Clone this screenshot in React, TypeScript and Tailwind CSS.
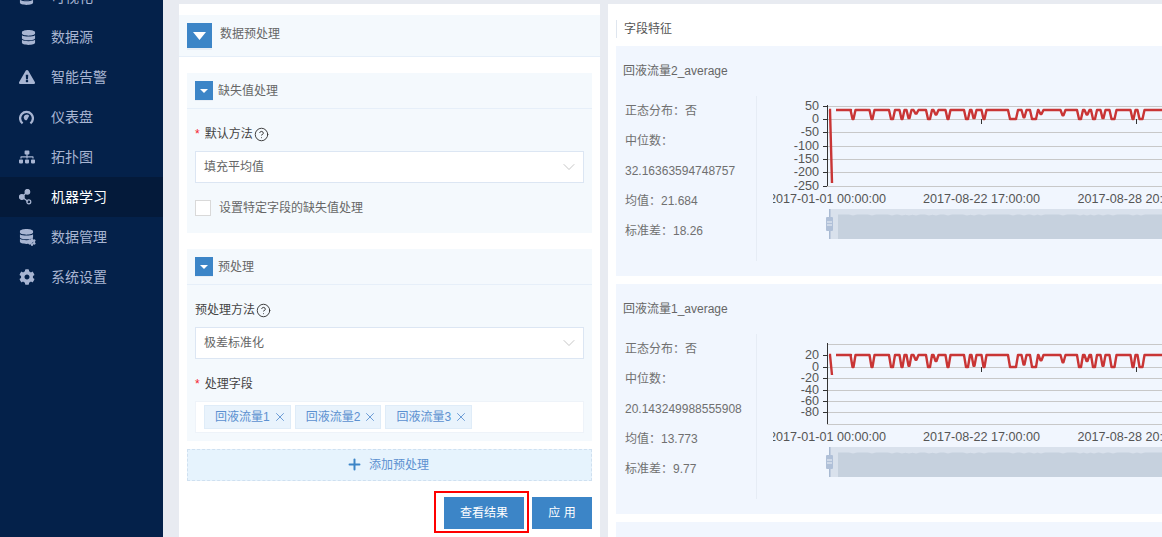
import { ChevronDown, CircleHelp, Plus, X } from "lucide-react";
import { FaCog, FaDatabase, FaExclamationTriangle, FaSitemap } from "react-icons/fa";

const FONT = "font-['Liberation_Sans','Noto_Sans_CJK_SC',sans-serif]";

function GaugeIcon() {
  return (
    <svg width="15" height="15" viewBox="0 0 15 15" fill="none">
      <path d="M3.6 13.4A6.4 6.4 0 1 1 11.4 13.4" stroke="currentColor" strokeWidth="2.3" />
      <path d="M5.4 9.2A2.8 2.8 0 0 1 10.2 5.8L8.2 9.4A1.5 1.5 0 0 1 5.4 9.2Z" fill="currentColor" />
    </svg>
  );
}

function MlIcon() {
  return (
    <svg width="15" height="16" viewBox="0 0 15 16" fill="none" stroke="currentColor" strokeWidth="1.2">
      <path d="M3 8L8 3M3 8L9 12.5" />
      <circle cx="2.8" cy="8" r="2.4" fill="currentColor" />
      <circle cx="8.4" cy="2.8" r="2.3" fill="currentColor" />
      <circle cx="9.8" cy="12.8" r="2" />
    </svg>
  );
}

function DataManageIcon() {
  return (
    <span className="relative block h-[16px] w-[16px]">
      <FaDatabase size={15} />
      <FaCog size={8} className="absolute -bottom-px -right-px" />
    </span>
  );
}

const NAV = [
  { label: "可视化", icon: <FaDatabase size={15} /> },
  { label: "数据源", icon: <FaDatabase size={15} className="ml-[2px]" /> },
  { label: "智能告警", icon: <FaExclamationTriangle size={16} /> },
  { label: "仪表盘", icon: <GaugeIcon /> },
  { label: "拓扑图", icon: <FaSitemap size={16} /> },
  { label: "机器学习", icon: <MlIcon />, active: true },
  { label: "数据管理", icon: <DataManageIcon /> },
  { label: "系统设置", icon: <FaCog size={16} /> },
];

// x = px from the chart's left edge, d = how deep the dip goes (0..1), w = half width of its floor
const DIPS: [number, number, number][] = [
  [80, 1, 0.5], [99, 1, 0.5], [119, 1, 1], [129, 1, 0.5], [136, 0.9, 0.5], [143, 0.4, 0.5], [156, 1, 1],
  [163, 0.5, 0.5], [175, 1, 0.5], [194, 1, 1], [201, 0.9, 0.5], [211, 1, 0.5], [240, 1, 3], [251, 0.8, 0.5],
  [261, 1, 2], [268, 0.45, 0.5], [290, 0.6, 0.5], [307, 1, 1], [314, 0.5, 0.5], [321, 1, 1], [330, 0.9, 0.5],
  [340, 1, 1.5], [360, 1, 0.5], [368, 1, 1.5],
];

function linePath(top: number, bottom: number) {
  let d = `M63 ${top}L78 ${top}`;
  for (const [x, depth, w] of DIPS) {
    const y = top + (bottom - top) * depth;
    d += `L${x - w - 2} ${top}L${x - w} ${y}L${x + w} ${y}L${x + w + 2} ${top}`;
  }
  return d + `L389 ${top}`;
}

function wave() {
  let d = "M65 5.5";
  for (const [x] of DIPS) d += `L${x - 4} 5.5L${x} 6.5L${x + 4} 5.5`;
  return d + "L389 5.5L389 30L65 30Z";
}

const XLABELS: [number, string][] = [
  [54.5, "2017-01-01 00:00:00"],
  [208.5, "2017-08-22 17:00:00"],
  [363, "2017-08-28 20:00:00"],
];

function Chart({ ticks, grid, zero, top, bottom, spike }: {
  ticks: [number, string][];
  grid: number[];
  zero: number;
  top: number;
  bottom: number;
  spike: number;
}) {
  return (
    <svg width="389" height="150" className="block shrink-0">
      {grid.map((y) => (
        <line key={y} x1="54" x2="389" y1={y + 0.5} y2={y + 0.5} stroke="#c8c8c8" />
      ))}
      <line x1="54.5" x2="54.5" y1={grid[0] - 1} y2="90" stroke="#333" />
      {ticks.map(([y, t]) => (
        <g key={t}>
          <line x1="50" x2="54" y1={y + 0.5} y2={y + 0.5} stroke="#333" />
          <text x="46" y={y + 4} textAnchor="end" fontSize="12.6" fill="#555">{t}</text>
        </g>
      ))}
      <line x1="208.5" x2="208.5" y1={zero} y2={zero + 5} stroke="#333" />
      <line x1="363.5" x2="363.5" y1={zero} y2={zero + 5} stroke="#333" />
      <path d={`M56 ${top}L57 ${top}L59 ${spike}`} stroke="#c93535" strokeWidth="2.4" fill="none" />
      <path d={linePath(top, bottom)} stroke="#c93535" strokeWidth="2.4" fill="none" strokeLinejoin="round" />
      {XLABELS.map(([x, t]) => (
        <text key={t} x={x} y="107" textAnchor="middle" fontSize="12.6" fill="#555">{t}</text>
      ))}
      <g transform="translate(0 113)">
        <rect x="56" width="333" height="30" fill="#d9e1ec" />
        <path d={wave()} fill="#c6d1de" />
        <rect x="56" width="1.5" height="30" fill="#a9bad2" />
        <rect x="53" y="8" width="7" height="14" rx="1" fill="#b0c0d8" />
        <rect x="54" y="12.5" width="5" height="1" fill="#eef2f8" />
        <rect x="54" y="15.5" width="5" height="1" fill="#eef2f8" />
      </g>
    </svg>
  );
}

function FieldCard({ title, stats, chart }: { title: string; stats: string[]; chart: React.ReactNode }) {
  return (
    <div className="mb-2 h-[230px] shrink-0 overflow-hidden bg-[#f1f6fe] pl-[7px] pt-[15px]">
      <p className="h-5 text-xs leading-5 text-[#666]">{title}</p>
      <div className="mt-[15px] flex items-start">
        <div className="h-[165px] w-[134px] shrink-0 border-r border-[#e6ecf5] pl-[2px] text-xs leading-[30px] text-[#707070]">
          {stats.map((s) => (
            <p key={s} className="whitespace-nowrap">{s}</p>
          ))}
        </div>
        <div className="ml-[16px]">{chart}</div>
      </div>
    </div>
  );
}

function Arrow({ big }: { big?: boolean }) {
  return big ? (
    <div className="flex h-[25px] w-[25px] shrink-0 items-center justify-center bg-[#3c85c7] shadow-[0_2px_0_#e8eef5]">
      <svg width="13" height="8"><path d="M0 0H13L6.5 8Z" fill="#fff" /></svg>
    </div>
  ) : (
    <div className="flex h-[19px] w-[18px] shrink-0 items-center justify-center bg-[#3c85c7] shadow-[0_1px_0_#e8eef5]">
      <svg width="8" height="4"><path d="M0 0H8L4 4Z" fill="#fff" /></svg>
    </div>
  );
}

function SubHeader({ title }: { title: string }) {
  return (
    <div className="flex h-[36px] items-start gap-[5px] border-b border-[#e6eff9] px-2 pt-2">
      <Arrow />
      <span className="text-xs leading-[21px] text-[#666]">{title}</span>
    </div>
  );
}

function Label({ text, required }: { text: string; required?: boolean }) {
  return (
    <div className="flex h-[18px] items-center text-xs text-[#444]">
      {required && <span className="mr-[5px] text-[#f5222d]">*</span>}
      <span>{text}</span>
    </div>
  );
}

function Select({ value }: { value: string }) {
  return (
    <div className="flex h-8 items-center justify-between border border-[#dce6f3] bg-white pl-2 pr-1 text-xs text-[#666]">
      <span>{value}</span>
      <ChevronDown size={20} strokeWidth={1} className="text-[#bbb]" />
    </div>
  );
}

function Tag({ text }: { text: string }) {
  return (
    <div className="flex h-6 items-center gap-[3px] border border-[#dfecf8] bg-[#e9f3fc] pl-[10px] pr-[3px] text-xs text-[#5b90d0]">
      <span>{text}</span>
      <X size={14} strokeWidth={1.5} className="text-[#5b90d0]" />
    </div>
  );
}

export default function App() {
  return (
    <div className={`${FONT} flex h-[537px] w-[1162px] overflow-hidden bg-[#e8ebf1]`}>
      <aside className="h-full w-[163px] shrink-0 overflow-hidden bg-[#04214a]">
        <div className="-mt-[23px]">
          {NAV.map((n) => (
            <div
              key={n.label}
              className={`flex h-10 items-center text-sm ${n.active ? "bg-[#041a3a] text-white" : "text-[#a8b5d2]"}`}
            >
              <span className="flex w-[51px] justify-start pl-[19px] text-[#a8b5d2]">{n.icon}</span>
              <span>{n.label}</span>
            </div>
          ))}
        </div>
      </aside>

      <main className="flex min-w-0 flex-1 gap-2 pl-4 pt-[4px]">
        <section className="h-[560px] w-[421px] shrink-0 bg-white pt-[11px]">
          <div className="flex h-[42px] items-start gap-2 border-b border-[#e6eff9] bg-[#f4f9fd] px-2 pt-2">
            <Arrow big />
            <span className="text-xs leading-[23px] text-[#666]">数据预处理</span>
          </div>
          <div className="px-2 pt-4">
            <div className="h-[160px] bg-[#f4f9fd]">
              <SubHeader title="缺失值处理" />
              <div className="px-2 pt-4">
                <div className="flex items-center gap-px">
                  <Label text="默认方法" required />
                  <CircleHelp size={15} strokeWidth={1.5} className="text-[#333]" />
                </div>
                <div className="mt-2"><Select value="填充平均值" /></div>
                <div className="mt-[17px] flex items-center gap-2">
                  <span className="h-4 w-4 border border-[#d9d9d9] bg-white" />
                  <span className="text-xs text-[#666]">设置特定字段的缺失值处理</span>
                </div>
              </div>
            </div>

            <div className="mt-4 h-[192px] bg-[#f4f9fd]">
              <SubHeader title="预处理" />
              <div className="px-2 pt-4">
                <div className="flex items-center gap-px">
                  <Label text="预处理方法" />
                  <CircleHelp size={15} strokeWidth={1.5} className="text-[#333]" />
                </div>
                <div className="mt-2"><Select value="极差标准化" /></div>
                <div className="mt-4"><Label text="处理字段" required /></div>
                <div className="mt-2 flex h-8 items-center gap-1 border border-[#eef3f9] bg-white pl-2">
                  <Tag text="回液流量1" />
                  <Tag text="回液流量2" />
                  <Tag text="回液流量3" />
                </div>
              </div>
            </div>

            <div className="mt-2 flex h-8 items-center justify-center gap-[9px] border border-dashed border-[#cfe0f0] bg-[#e6f3fd] pb-px text-xs text-[#5b90d0]">
              <Plus size={17} strokeWidth={2.8} className="-mx-[3.5px] text-[#3c85c7]" />
              <span>添加预处理</span>
            </div>

            <div className="mt-4 flex justify-end gap-2">
              <div className="relative">
                <button className="h-8 w-20 bg-[#3c85c7] text-xs text-white">查看结果</button>
                <span className="pointer-events-none absolute -bottom-[4px] -left-[10px] -right-[5px] -top-[6px] border-2 border-[#f00]" />
              </div>
              <button className="h-8 w-[60px] bg-[#3c85c7] text-xs text-white">应 用</button>
            </div>
          </div>
        </section>

        <section className="flex min-w-0 flex-1 flex-col bg-white pl-2 pt-[16px]">
          <div className="h-[18px] border-l border-[#dfe6ef] pl-[7px] text-xs leading-[18px] text-[#555]">字段特征</div>
          <div className="mt-2 flex flex-col">
            <FieldCard
              title="回液流量2_average"
              stats={["正态分布\uFF1A否", "中位数\uFF1A", "32.16363594748757", "均值\uFF1A21.684", "标准差\uFF1A18.26"]}
              chart={
                <Chart
                  ticks={[[10, "50"], [23, "0"], [36, "-50"], [50, "-100"], [63, "-150"], [76, "-200"], [90, "-250"]]}
                  grid={[10, 23, 36, 50, 63, 76, 90]}
                  zero={23}
                  top={14}
                  bottom={23}
                  spike={87}
                />
              }
            />
            <FieldCard
              title="回液流量1_average"
              stats={["正态分布\uFF1A否", "中位数\uFF1A", "20.143249988555908", "均值\uFF1A13.773", "标准差\uFF1A9.77"]}
              chart={
                <Chart
                  ticks={[[21, "20"], [33, "0"], [44, "-20"], [56, "-40"], [67, "-60"], [78, "-80"]]}
                  grid={[10, 33, 44, 56, 67, 78, 90]}
                  zero={33}
                  top={21}
                  bottom={33}
                  spike={41}
                />
              }
            />
            <div className="h-[40px] shrink-0 bg-[#f1f6fe]" />
          </div>
        </section>
      </main>
    </div>
  );
}
